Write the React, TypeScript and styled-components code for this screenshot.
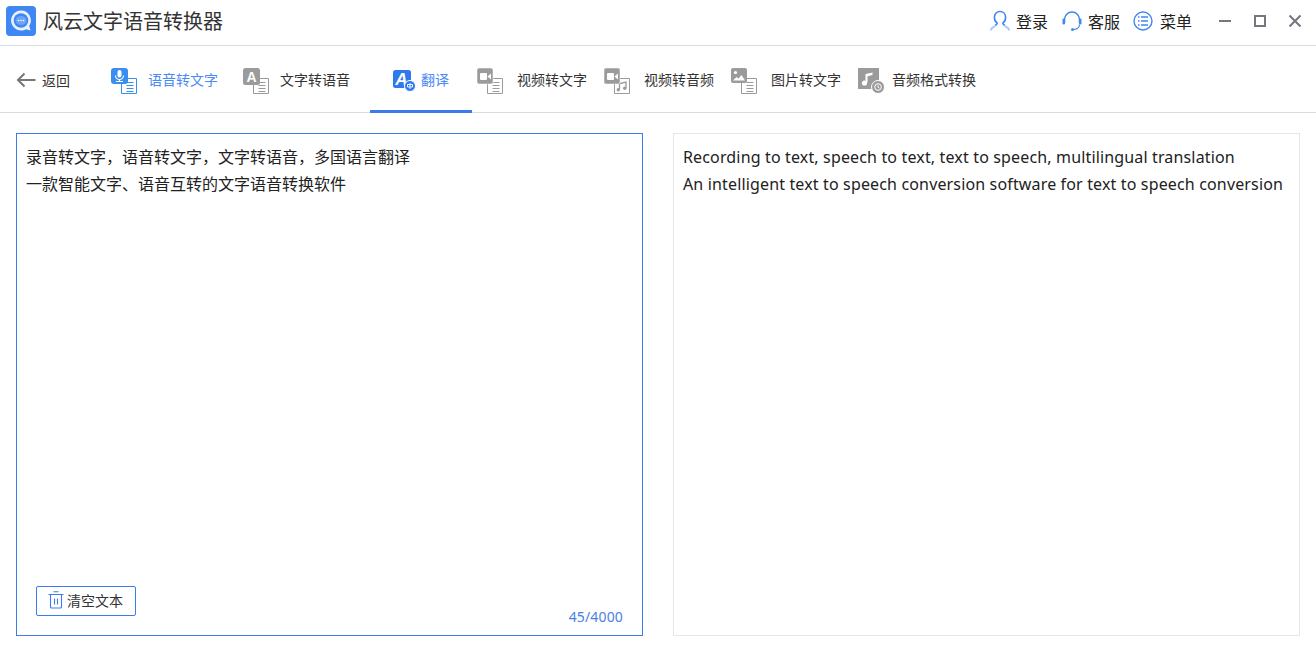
import React from "react";
import styled, { createGlobalStyle } from "styled-components";

const BLUE = "#3b7cec";
const CJK = `"Liberation Sans", "Noto Sans CJK SC", sans-serif`;

const Global = createGlobalStyle`
  html, body { margin: 0; padding: 0; background: #fff; }
  body { font-family: ${CJK}; color: #333; overflow: hidden; }
  * { box-sizing: border-box; }
`;

const Page = styled.div`
  width: 1316px;
  height: 658px;
  display: flex;
  flex-direction: column;
`;

const TitleBar = styled.header`
  height: 46px;
  flex: none;
  border-bottom: 1px solid #dcdcdc;
  display: flex;
  align-items: center;
  padding: 0 0 4px 6px;
`;

const AppName = styled.h1`
  margin: 0 0 0 7px;
  font-size: 20px;
  font-weight: 400;
  color: #333;
  white-space: nowrap;
`;

const TitleActions = styled.div`
  margin-left: auto;
  display: flex;
  align-items: center;
`;

const TitleAction = styled.div<{ $width: number; $gap: number }>`
  width: ${(p) => p.$width}px;
  display: flex;
  align-items: center;
  gap: ${(p) => p.$gap}px;
  font-size: 16px;
  color: #222;
`;

const WinButtons = styled.div`
  display: flex;
  align-items: center;
  gap: 21px;
  margin: 0 14px 0 26px;
`;

const TabBar = styled.nav`
  height: 67px;
  flex: none;
  border-bottom: 1px solid #dcdcdc;
  display: flex;
  align-items: stretch;
  padding-left: 16px;
`;

const Back = styled.div`
  width: 90px;
  padding-top: 2px;
  display: flex;
  align-items: center;
  gap: 6px;
  font-size: 14px;
  color: #333;
`;

const Tab = styled.div<{ $width: number; $pad: number; $active?: boolean; $accent?: boolean }>`
  width: ${(p) => p.$width}px;
  padding: 2px 0 0 ${(p) => p.$pad}px;
  margin-bottom: -1px;
  display: flex;
  align-items: center;
  font-size: 14px;
  white-space: nowrap;
  color: ${(p) => (p.$accent ? "#4a8af4" : "#333")};
  border-bottom: 3px solid ${(p) => (p.$active ? BLUE : "transparent")};
`;

const TabIcon = styled.span<{ $width: number }>`
  width: ${(p) => p.$width}px;
  margin-top: 4px;
  flex: none;
  display: flex;
`;

const Panels = styled.main`
  flex: 1;
  display: flex;
  gap: 30px;
  padding: 20px 16px 22px;
`;

const Panel = styled.section<{ $focus?: boolean }>`
  position: relative;
  flex: 1;
  border: 1px solid ${(p) => (p.$focus ? BLUE : "#e6e6e6")};
  padding: 10px 9px;
  font-size: 16px;
  line-height: 27px;
  color: #222;
`;

const EnglishText = styled.div`
  font-family: "Noto Sans", sans-serif;
  font-size: 16px;
  letter-spacing: 0.15px;
  white-space: nowrap;
`;

const Line = styled.div`
  white-space: nowrap;
`;

const ClearButton = styled.button`
  position: absolute;
  left: 19px;
  bottom: 19px;
  width: 100px;
  height: 30px;
  padding: 0 0 2px 11px;
  background: #fff;
  border: 1px solid ${BLUE};
  border-radius: 2px;
  display: flex;
  align-items: center;
  gap: 3px;
  font-family: ${CJK};
  font-size: 14px;
  color: #333;
`;

const Counter = styled.span`
  position: absolute;
  right: 19px;
  bottom: 8px;
  font-family: "Noto Sans", sans-serif;
  font-size: 14px;
  letter-spacing: 0.15px;
  line-height: 20px;
  color: #4a7fe8;
`;

const GREY = "#9b9b9b";
const ICON_BLUE = "#3a8ef0";

/* small document sheet that sits behind most tab icons */
const Doc = ({ color }: { color: string }) => (
  <g fill="#fff" stroke={color}>
    <path d="M10.5 10.5h15v15h-15z" />
    <path d="M15.5 14.5h7M15.5 17.5h7M15.5 20.5h7M15.5 23.5h7" />
  </g>
);

const Camera = () => (
  <>
    <rect x="0" y="0" width="16" height="16" rx="2" fill={GREY} stroke="#fff" strokeWidth="0.5" />
    <rect x="3" y="5" width="7" height="7" rx="1" fill="#fff" />
    <path d="M10.5 8.5l3.5-3v6z" fill="#fff" />
  </>
);

const Sheet = ({ kind }: { kind: string }) => {
  switch (kind) {
    case "voice":
      return (
        <>
          <Doc color={ICON_BLUE} />
          <rect x="0" y="0" width="17" height="16" rx="3" fill={ICON_BLUE} />
          <rect x="6.5" y="2" width="4" height="7.5" rx="2" fill="#fff" />
          <path d="M4.5 7.5a4 4 0 0 0 8 0M8.5 11.5v2M5 13.5h7" fill="none" stroke="#fff" strokeWidth="1.2" />
        </>
      );
    case "text":
      return (
        <>
          <Doc color={GREY} />
          <rect x="0" y="0" width="17" height="17" rx="2.5" fill={GREY} />
          <text x="8.5" y="13.5" textAnchor="middle" fontFamily="Liberation Sans" fontWeight="700" fontSize="14" fill="#fff">
            A
          </text>
        </>
      );
    case "video":
      return (
        <>
          <Doc color={GREY} />
          <Camera />
        </>
      );
    case "audio":
      return (
        <>
          <path d="M10.5 10.5h15v15h-15z" fill="#fff" stroke={GREY} />
          <path d="M15.5 21.5v-6l6.5-1.5v6" fill="none" stroke={GREY} strokeWidth="1.3" />
          <circle cx="14.3" cy="21.7" r="1.7" fill={GREY} />
          <circle cx="20.7" cy="20.2" r="1.7" fill={GREY} />
          <Camera />
        </>
      );
    case "image":
      return (
        <>
          <Doc color={GREY} />
          <rect x="0" y="0" width="16" height="15" rx="2" fill={GREY} />
          <circle cx="4.5" cy="4.5" r="1.6" fill="#fff" />
          <path d="M2 12.5l3.500-3.500 2 1.500 3-3.500 3.500 5.500z" fill="#fff" />
        </>
      );
    default:
      return (
        <>
          <rect x="0" y="0" width="21" height="21" fill={GREY} />
          <path d="M7.5 14.5V6l7-1.500v2.500l-5 1.200v6z" fill="#fff" />
          <circle cx="6.5" cy="15" r="2.6" fill="#fff" />
          <circle cx="20" cy="19" r="6.5" fill={GREY} stroke="#fff" />
          <circle cx="20" cy="19" r="3.3" fill="none" stroke="#fff" />
          <path d="M20 17.2v2l1.400.8" fill="none" stroke="#fff" strokeWidth="0.9" />
        </>
      );
  }
};

const TabGlyph = ({ kind }: { kind: string }) => {
  if (kind === "translate")
    return (
      <svg width="24" height="22" viewBox="0 0 24 22">
        <rect x="0" y="0" width="18" height="18" rx="2.5" fill="#2f78ee" />
        <text x="8.5" y="15" textAnchor="middle" fontFamily="Liberation Sans" fontWeight="700" fontStyle="italic" fontSize="17" fill="#fff">
          A
        </text>
        <circle cx="17" cy="16" r="5.5" fill="#2f78ee" stroke="#fff" />
        <path d="M14.5 14.5h5v2.500h-5zM17 13v6" fill="none" stroke="#fff" strokeWidth="0.9" />
      </svg>
    );
  return (
    <svg width="28" height="26" viewBox="0 0 28 26">
      <Sheet kind={kind} />
    </svg>
  );
};

const tabs = [
  { label: "语音转文字", kind: "voice", width: 132, pad: 5, icon: 37, accent: true },
  { label: "文字转语音", kind: "text", width: 132, pad: 5, icon: 37 },
  { label: "翻译", kind: "translate", width: 102, pad: 23, icon: 28, accent: true, active: true },
  { label: "视频转文字", kind: "video", width: 127, pad: 5, icon: 40 },
  { label: "视频转音频", kind: "audio", width: 127, pad: 5, icon: 40 },
  { label: "图片转文字", kind: "image", width: 127, pad: 5, icon: 40 },
  { label: "音频格式转换", kind: "format", width: 140, pad: 5, icon: 34 },
];

const App = (): JSX.Element => {
  return (
    <Page>
      <Global />
      <TitleBar>
        <svg width="30" height="30" viewBox="0 0 30 30">
          <rect width="30" height="30" rx="4" fill="#3f87f2" />
          <path d="M15 4.5a10 10 0 1 0 5 18.700l4.500 1.300-1.300-4.500A10 10 0 0 0 15 4.500z" fill="#e9f1fe" />
          <circle cx="15" cy="14.5" r="7.3" fill="#3f87f2" />
          <ellipse cx="15" cy="14.5" rx="5.5" ry="4.5" fill="#6ea4f5" />
          <circle cx="12.5" cy="14.5" r="0.8" fill="#fff" />
          <circle cx="15" cy="14.5" r="0.8" fill="#fff" />
          <circle cx="17.5" cy="14.5" r="0.8" fill="#fff" />
        </svg>
        <AppName>风云文字语音转换器</AppName>
        <TitleActions>
          <TitleAction $width={72} $gap={5}>
            <svg width="22" height="22" viewBox="0 0 22 22" fill="none">
              <path d="M11 1.5c-3.400 0-5.600 2.500-5.600 5.900 0 2.400 1 4.400 2.800 5.700 0 1-.6 1.700-2 2.400" stroke="#3f87f2" strokeWidth="1.6" />
              <path d="M11 1.5c3.400 0 5.600 2.500 5.600 5.900 0 2.400-1 4.400-2.800 5.700 0 1 .6 1.700 2 2.400" stroke="#3f87f2" strokeWidth="1.6" />
              <path d="M1.500 20.500c.5-2 1.800-3.300 4.700-4.400M20.500 20.500c-.5-2-1.800-3.300-4.700-4.400" stroke="#a9caf9" strokeWidth="1.7" />
            </svg>
            登录
          </TitleAction>
          <TitleAction $width={72} $gap={5}>
            <svg width="22" height="22" viewBox="0 0 22 22" fill="none">
              <path d="M3.500 13V9.500a7.500 7.500 0 0 1 15 0V13" stroke="#3f87f2" strokeWidth="1.5" />
              <rect x="1.5" y="8.5" width="2.5" height="6" rx="1.2" fill="#3f87f2" />
              <rect x="18" y="8.5" width="2.5" height="6" rx="1.2" fill="#3f87f2" />
              <path d="M18.500 14.500c0 3-2.500 5-6 5" stroke="#3f87f2" strokeWidth="1.2" />
              <circle cx="11.5" cy="19.5" r="1.5" fill="#3f87f2" />
            </svg>
            客服
          </TitleAction>
          <TitleAction $width={59} $gap={7}>
            <svg width="20" height="20" viewBox="0 0 20 20" fill="none">
              <circle cx="10" cy="10" r="9" stroke="#3f87f2" strokeWidth="1.4" />
              <path d="M8 6h7M8 10h7M8 14h7M5 6h1.500M5 10h1.500M5 14h1.500" stroke="#3f87f2" strokeWidth="1.5" />
            </svg>
            菜单
          </TitleAction>
          <WinButtons>
            <svg width="14" height="14" viewBox="0 0 14 14">
              <path d="M1 7h12" stroke="#77757f" strokeWidth="2" />
            </svg>
            <svg width="14" height="14" viewBox="0 0 14 14" fill="none">
              <rect x="2" y="2" width="10" height="10" stroke="#77757f" strokeWidth="2" />
            </svg>
            <svg width="14" height="14" viewBox="0 0 14 14">
              <path d="M1.500 1.500l11 11M12.500 1.500l-11 11" stroke="#77757f" strokeWidth="2" />
            </svg>
          </WinButtons>
        </TitleActions>
      </TitleBar>

      <TabBar>
        <Back>
          <svg width="20" height="16" viewBox="0 0 20 16" fill="none">
            <path d="M19.500 8H2M8.500 1.500L2 8l6.500 6.500" stroke="#777" strokeWidth="2" />
          </svg>
          返回
        </Back>
        {tabs.map((t) => (
          <Tab key={t.label} $width={t.width} $pad={t.pad} $active={t.active} $accent={t.accent}>
            <TabIcon $width={t.icon}>
              <TabGlyph kind={t.kind} />
            </TabIcon>
            {t.label}
          </Tab>
        ))}
      </TabBar>

      <Panels>
        <Panel $focus>
          <Line>录音转文字，语音转文字，文字转语音，多国语言翻译</Line>
          <Line>一款智能文字、语音互转的文字语音转换软件</Line>
          <ClearButton>
            <svg width="16" height="18" viewBox="0 0 16 18" fill="none" stroke={BLUE}>
              <path d="M0.5 3.5h15M5.500 0.800h5M2.500 3.500v12.500a1 1 0 0 0 1 1h9a1 1 0 0 0 1-1V3.500M6.500 7.500v6M9.500 7.500v6" strokeWidth="1.1" />
            </svg>
            清空文本
          </ClearButton>
          <Counter>45/4000</Counter>
        </Panel>
        <Panel>
          <EnglishText>Recording to text, speech to text, text to speech, multilingual translation</EnglishText>
          <EnglishText>An intelligent text to speech conversion software for text to speech conversion</EnglishText>
        </Panel>
      </Panels>
    </Page>
  );
};

export default App;
